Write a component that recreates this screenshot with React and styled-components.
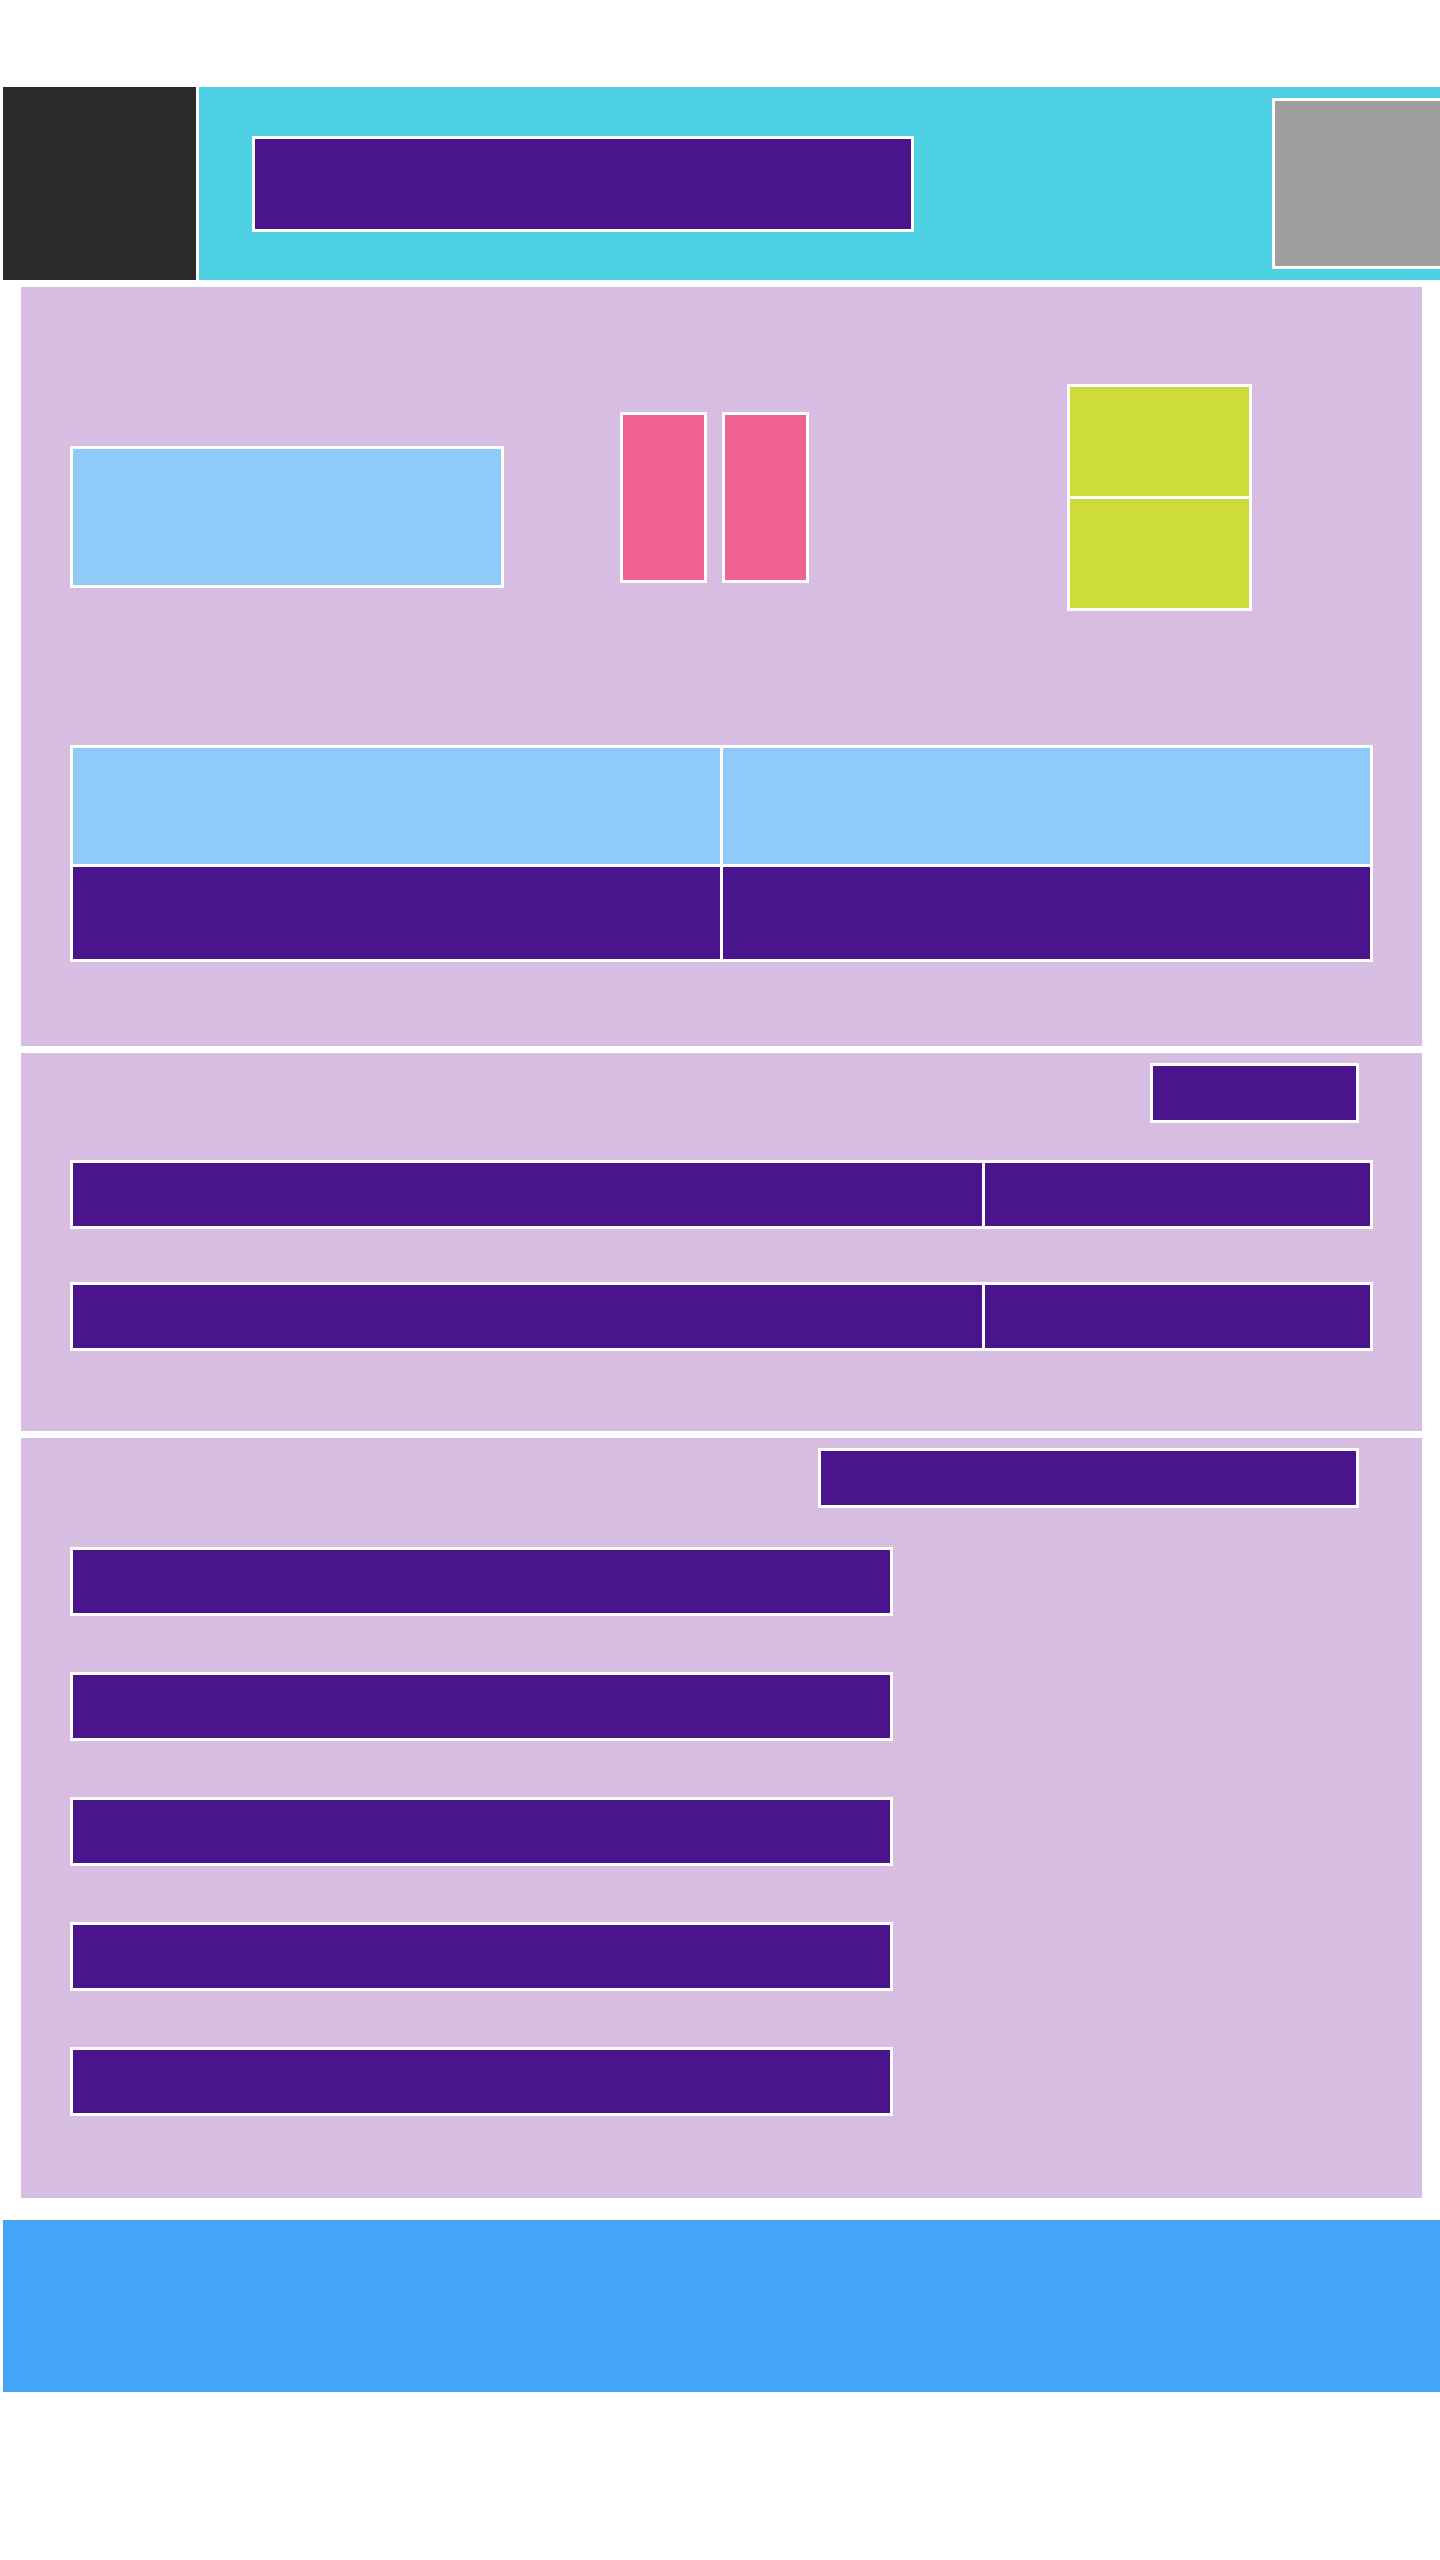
import styled, { createGlobalStyle } from 'styled-components';

const GlobalStyle = createGlobalStyle`
  html, body {
    margin: 0;
    padding: 0;
    background: #ffffff;
    font-family: "Liberation Sans", Arial, sans-serif;
  }
`;

const purple = '#4A148C';
const lavender = '#D7BDE2';

const Page = styled.div`
    width: 1440px;
    box-sizing: border-box;
    padding: 87px 0 0 3px;
    overflow: hidden;
`;

// header strip
const Header = styled.header`
    display: flex;
    gap: 3px;
    height: 193px;
`;

const Logo = styled.div`
    width: 193px;
    flex-shrink: 0;
    background-color: #2B2B2B;
`;

const Bar = styled.div`
    flex: 1;
    display: flex;
    align-items: center;
    padding-left: 56px;
    background-color: #4DD0E1;
`;

const Title = styled.div`
    width: 656px;
    height: 90px;
    background-color: ${purple};
    box-shadow: 0 0 0 3px #fff;
`;

const Avatar = styled.div`
    width: 165px;
    height: 165px;
    margin-left: auto;
    flex-shrink: 0;
    background-color: #9E9E9E;
    box-shadow: 0 0 0 3px #fff;
`;

const Panel = styled.section`
    width: 1401px;
    box-sizing: border-box;
    margin: 7px 0 0 18px;
    padding: ${p => p.$pad};
    background-color: ${lavender};
`;

const TopRow = styled.div`
    display: flex;
    align-items: center;
`;

const Banner = styled.div`
    width: 428px;
    height: 136px;
    margin-top: 39px;
    background-color: #90CAF9;
    box-shadow: 0 0 0 3px #fff;
`;

const Pills = styled.div`
    display: flex;
    gap: 21px;
    margin-left: 122px;
`;

const Pill = styled.div`
    width: 81px;
    height: 165px;
    background-color: #F06292;
    box-shadow: 0 0 0 3px #fff;
`;

const Tiles = styled.div`
    display: flex;
    flex-direction: column;
    gap: 3px;
    margin-left: 264px;
`;

const Tile = styled.div`
    width: 179px;
    height: 109px;
    background-color: #CDDC39;
    box-shadow: 0 0 0 3px #fff;
`;

const Table = styled.div`
    display: grid;
    grid-template-columns: 647px 647px;
    grid-template-rows: 116px 92px;
    gap: 3px;
    margin-top: 140px;
`;

const Cell = styled.div`
    background-color: ${p => (p.$head ? '#90CAF9' : purple)};
    box-shadow: 0 0 0 3px #fff;
`;

const ButtonRow = styled.div`
    display: flex;
    justify-content: flex-end;
    padding-right: 14px;
`;

const ActionButton = styled.div`
    width: ${p => p.$w}px;
    height: 54px;
    background-color: ${purple};
    box-shadow: 0 0 0 3px #fff;
`;

const Rows = styled.div`
    display: flex;
    flex-direction: column;
    gap: ${p => p.$gap}px;
    margin-top: ${p => p.$top}px;
`;

const SplitRow = styled.div`
    display: grid;
    grid-template-columns: 909px 385px;
    gap: 3px;
    height: 63px;
`;

const ListItem = styled.div`
    width: 817px;
    height: 63px;
    background-color: ${purple};
    box-shadow: 0 0 0 3px #fff;
`;

const Footer = styled.footer`
    height: 172px;
    margin-top: 22px;
    background-color: #42A5F5;
`;

const App = () => {
    return (
        <>
            <GlobalStyle />
            <Page>
                <Header>
                    <Logo />
                    <Bar>
                        <Title />
                        <Avatar />
                    </Bar>
                </Header>

                <Panel $pad="100px 52px 87px">
                    <TopRow>
                        <Banner />
                        <Pills>
                            <Pill />
                            <Pill />
                        </Pills>
                        <Tiles>
                            <Tile />
                            <Tile />
                        </Tiles>
                    </TopRow>
                    <Table>
                        <Cell $head />
                        <Cell $head />
                        <Cell />
                        <Cell />
                    </Table>
                </Panel>

                <Panel $pad="13px 52px 83px">
                    <ButtonRow>
                        <ActionButton $w={203} />
                    </ButtonRow>
                    <Rows $gap={59} $top={43}>
                        {[0, 1].map(i => (
                            <SplitRow key={i}>
                                <Cell />
                                <Cell />
                            </SplitRow>
                        ))}
                    </Rows>
                </Panel>

                <Panel $pad="13px 52px 85px">
                    <ButtonRow>
                        <ActionButton $w={535} />
                    </ButtonRow>
                    <Rows $gap={62} $top={45}>
                        {[0, 1, 2, 3, 4].map(i => (
                            <ListItem key={i} />
                        ))}
                    </Rows>
                </Panel>

                <Footer />
            </Page>
        </>
    );
};

export default App;
